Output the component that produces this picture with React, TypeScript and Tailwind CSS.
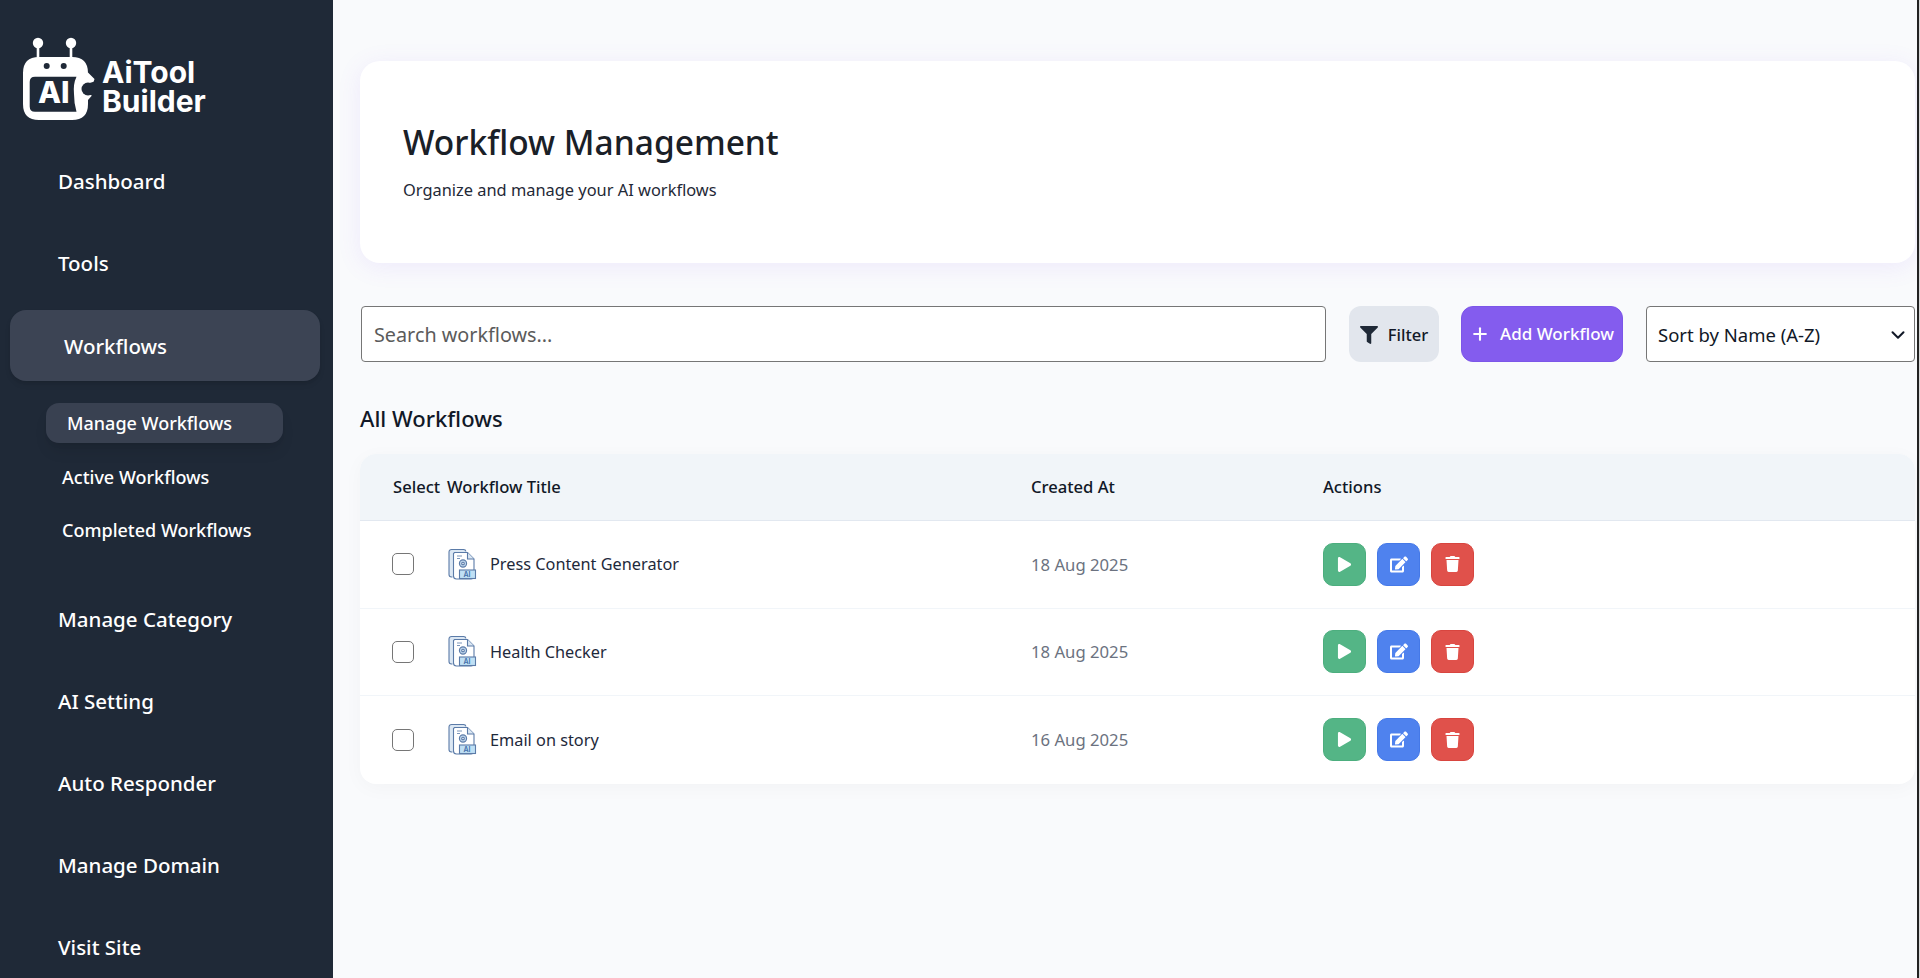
import { ChevronDown, Plus } from 'lucide-react';
import { FaEdit, FaFilter, FaPlay, FaTrash } from 'react-icons/fa';

const navTop = ['Dashboard', 'Tools'];
const navBottom = ['Manage Category', 'AI Setting', 'Auto Responder', 'Manage Domain', 'Visit Site'];
const workflows = [
  { title: 'Press Content Generator', date: '18 Aug 2025' },
  { title: 'Health Checker', date: '18 Aug 2025' },
  { title: 'Email on story', date: '16 Aug 2025' },
];

function Logo() {
  return (
    <svg viewBox="0 0 80 88" className="w-[80px] h-[88px] shrink-0">
      <circle cx="19" cy="9" r="5.200" fill="#fff" />
      <circle cx="52" cy="9" r="5.200" fill="#fff" />
      <rect x="17.700" y="12" width="2.600" height="13" fill="#fff" />
      <rect x="50.700" y="12" width="2.600" height="13" fill="#fff" />
      {/* head */}
      <path
        d="M20 23H53Q69 23 69 39V38.500L75.500 45L74 50L72.500 62L69 66V70Q69 86 53 86H20Q4 86 4 70V39Q4 23 20 23z"
        fill="#fff"
      />
      <circle cx="27.700" cy="32" r="3" fill="#1f2937" />
      <circle cx="44.700" cy="32" r="3" fill="#1f2937" />
      {/* screen */}
      <path d="M16 42.700H57.500Q54 50 55 60Q55 70 57.500 77.700H16Q10.700 77.700 10.700 72.400V48Q10.700 42.700 16 42.700z" fill="#1f2937" />
      {/* bite on the right side */}
      <circle cx="69" cy="55" r="6.500" fill="#1f2937" />
      <path d="M69 49.500L77 47V62L69 60.500z" fill="#1f2937" />
      <text x="19" y="68.500" fontSize="30" fontWeight="800" fill="#fff" fontFamily="Inter, sans-serif">
        AI
      </text>
    </svg>
  );
}

function FileIcon() {
  return (
    <svg viewBox="0 0 30 33" className="w-[31px] h-[33px] shrink-0" fill="none" stroke="#5b7ba8" strokeWidth="1.100">
      <path d="M5 29H4A2.500 2.500 0 0 1 1.500 26.500V4A2.500 2.500 0 0 1 4 1.500H16A2.500 2.500 0 0 1 18.500 3.500" fill="#dbe7f3" />
      <path d="M7 4.500H20L26.500 11V28A3 3 0 0 1 23.500 31H9A3 3 0 0 1 6 28V5.500z" fill="#fff" />
      <path d="M20 4.500V11H26.500" fill="#dbe7f3" />
      <path d="M9.500 8H14.500M9.500 10.500H12.500" strokeWidth="0.800" />
      <circle cx="15.500" cy="15.500" r="3.600" fill="#bcd3ea" />
      <circle cx="15.500" cy="15.500" r="1.300" fill="#fff" />
      <rect x="12" y="22" width="16" height="8.500" fill="#bfe0f5" />
      <text x="16" y="29" fontSize="7" stroke="none" fill="#3f6fa8" fontFamily="Inter, sans-serif" fontWeight="600">
        AI
      </text>
    </svg>
  );
}

export default function App() {
  return (
    <div className="flex h-[978px] w-[1920px] overflow-hidden bg-[#f9fafc] font-['Noto_Sans',sans-serif] text-[#111827]">
      <aside className="w-[333px] shrink-0 bg-[#1f2937] text-white">
        <div className="flex items-start gap-[3px] pl-[19px] pt-[34px] h-[140px]">
          <Logo />
          <div className="text-[30px] leading-[29px] font-bold mt-[24px] font-['Inter',sans-serif]">
            AiTool
            <br />
            Builder
          </div>
        </div>
        <nav className="flex flex-col">
          {navTop.map((n) => (
            <div key={n} className="h-[82px] flex items-center pl-[58px] text-[20.500px] font-medium">
              {n}
            </div>
          ))}
          <div className="ml-[10px] mr-[13px] mt-[6px] h-[71px] rounded-[16px] bg-[#3c4454] shadow-md flex items-center pl-[54px] pt-[2px] text-[20.500px] font-medium">
            Workflows
          </div>
          <div className="mt-[22px] ml-[46px] w-[237px] h-[40px] rounded-[13px] bg-[#394151] shadow-lg flex items-center pl-[21px] pt-[1px] text-[18px] font-medium">
            Manage Workflows
          </div>
          <div className="h-[53px] mt-[8px] flex items-center pl-[62px] text-[18px] font-medium">Active Workflows</div>
          <div className="h-[53px] flex items-center pl-[62px] text-[18px] font-medium">Completed Workflows</div>
          <div className="mt-[21px]">
            {navBottom.map((n) => (
              <div key={n} className="h-[82px] flex items-center pl-[58px] text-[20.500px] font-medium">
                {n}
              </div>
            ))}
          </div>
        </nav>
      </aside>
      <main className="flex-1 pl-[27px] pr-[2px] pt-[61px] min-w-0">
        <section className="h-[202px] rounded-[20px] bg-white shadow-[0_4px_25px_rgba(139,92,246,0.1)] pl-[43px] pt-[57px]">
          <h1 className="text-[33.500px] leading-[48px] font-medium text-[#1a2027]">Workflow Management</h1>
          <p className="mt-[12px] text-[16.400px] leading-[24px] text-[#1f2937]">Organize and manage your AI workflows</p>
        </section>
        <div className="mt-[43px] flex h-[56px] items-stretch">
          <div className="ml-[1px] w-[965px] rounded-[4px] border border-[#767676] bg-white flex items-center pl-[12px] pt-[2px] text-[19.800px] text-[#5b5b5b]">
            Search workflows...
          </div>
          <button className="ml-[23px] w-[90px] rounded-[12px] bg-[#e2e6ed] flex items-center justify-center gap-[10px] pt-[2px] text-[16.500px] font-medium">
            <FaFilter className="w-[18px] h-[18px] text-[#1f2937]" />
            Filter
          </button>
          <button className="ml-[22px] w-[162px] rounded-[12px] border border-[#7c56e8] bg-[#845cee] text-white flex items-center justify-center gap-[10px] text-[17px] font-medium">
            <Plus className="w-[20px] h-[20px]" strokeWidth={2.500} />
            Add Workflow
          </button>
          <div className="ml-[23px] w-[269px] rounded-[4px] border border-[#767676] bg-white flex items-center justify-between pl-[11px] pr-[5px] pt-[1px] text-[18.500px]">
            Sort by Name (A-Z)
            <ChevronDown className="w-[22px] h-[22px]" strokeWidth={2.200} />
          </div>
        </div>
        <h2 className="mt-[40px] text-[22px] leading-[32px] font-medium">All Workflows</h2>
        <div className="mt-[20px] rounded-[16px] bg-white shadow-[0_4px_20px_rgba(0,0,0,0.03)] overflow-hidden">
          <div className="h-[67px] flex items-center bg-[#f1f5f9] border-b border-[#e2e8f0] text-[16.600px] font-medium">
            <div className="pl-[33px] w-[87px]">Select</div>
            <div className="w-[584px]">Workflow Title</div>
            <div className="w-[292px]">Created At</div>
            <div>Actions</div>
          </div>
          {workflows.map((w, i) => (
            <div key={w.title} className={`h-[87.500px] flex items-center ${i < 2 ? 'border-b border-[#f1f5f9]' : ''}`}>
              <div className="pl-[32px] w-[87px]">
                <div className="w-[22px] h-[22px] rounded-[5px] border border-[#767676] bg-white" />
              </div>
              <div className="w-[584px] flex items-center gap-[12px] text-[16.300px] text-[#1e293b]">
                <FileIcon />
                {w.title}
              </div>
              <div className="w-[292px] text-[16.700px] text-[#6b7280]">{w.date}</div>
              <div className="flex gap-[11px]">
                <button className="w-[43px] h-[43px] rounded-[10px] border border-[#4cae7e] bg-[#54b586] text-white flex items-center justify-center">
                  <FaPlay className="w-[15px] h-[15px]" />
                </button>
                <button className="w-[43px] h-[43px] rounded-[10px] border border-[#4579e8] bg-[#4f82ee] text-white flex items-center justify-center">
                  <FaEdit className="w-[18px] h-[17px]" />
                </button>
                <button className="w-[43px] h-[43px] rounded-[10px] border border-[#d8453f] bg-[#e0514b] text-white flex items-center justify-center">
                  <FaTrash className="w-[15px] h-[16px]" />
                </button>
              </div>
            </div>
          ))}
        </div>
      </main>
      <div className="w-[2px] shrink-0 bg-[#222222]" />
      <div className="w-[1px] shrink-0 bg-[#d8d8d8]" />
    </div>
  );
}
